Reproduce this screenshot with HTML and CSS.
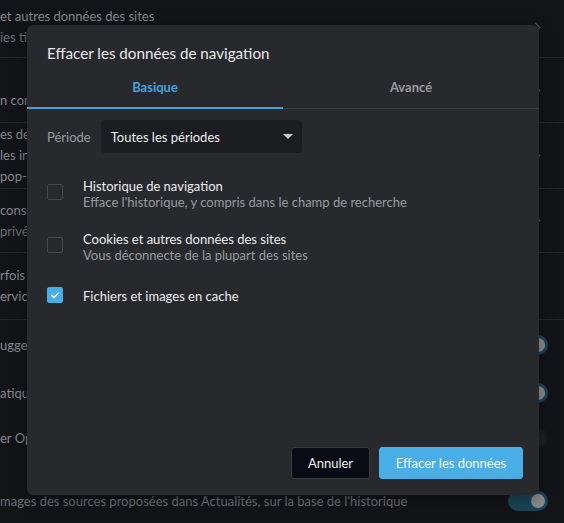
FILE: index.html
```html
<!DOCTYPE html>
<html lang="fr">
<head>
<meta charset="utf-8">
<title>Effacer les données de navigation</title>
<link rel="stylesheet" href="styles.css">
</head>
<body>
<main class="settings">
  <section class="row r1">
    <div class="texts">
      <p class="t1">et autres données des sites</p>
      <p class="t2 clip">ies tierces sont bloqués</p>
    </div>
    <span class="chev"></span>
  </section>
  <section class="row r2">
    <div class="texts clip">
      <p class="t1">&nbsp;</p>
      <p class="t1">n complète</p>
    </div>
    <span class="chev"></span>
  </section>
  <section class="row r3">
    <div class="texts clip">
      <p class="t1">es de sites</p>
      <p class="t1">les informations</p>
      <p class="t1">pop-up, redirections</p>
    </div>
    <span class="chev"></span>
  </section>
  <section class="row r4">
    <div class="texts clip">
      <p class="t1">conservation</p>
      <p class="t2">privée</p>
    </div>
    <span class="chev"></span>
  </section>
  <section class="row r5">
    <div class="texts clip">
      <p class="t1">rfois un service</p>
      <p class="t1">ervices</p>
    </div>
  </section>
  <section class="row r6 plain">
    <p class="t1 clip">ugges</p>
    <span class="toggle on"></span>
  </section>
  <section class="row r7 plain">
    <p class="t1 clip">atiqu</p>
    <span class="toggle on"></span>
  </section>
  <section class="row r8 plain">
    <p class="t1 clip">er Opera</p>
    <span class="toggle off"></span>
  </section>
  <section class="row r9 plain">
    <p class="t2">mages des sources proposées dans Actualités, sur la base de l'historique</p>
    <span class="toggle on"></span>
  </section>
</main>

<div class="dialog" role="dialog" aria-label="Effacer les données de navigation">
  <h1 class="title">Effacer les données de navigation</h1>
  <nav class="tabs">
    <span class="tab active">Basique</span>
    <span class="tab">Avancé</span>
  </nav>
  <div class="period">
    <span class="period-label">Période</span>
    <div class="select">
      <span>Toutes les périodes</span>
      <span class="caret"></span>
    </div>
  </div>
  <ul class="options">
    <li class="option">
      <span class="box"></span>
      <div>
        <div class="opt-title">Historique de navigation</div>
        <div class="opt-sub">Efface l'historique, y compris dans le champ de recherche</div>
      </div>
    </li>
    <li class="option">
      <span class="box"></span>
      <div>
        <div class="opt-title">Cookies et autres données des sites</div>
        <div class="opt-sub">Vous déconnecte de la plupart des sites</div>
      </div>
    </li>
    <li class="option single">
      <span class="box checked"><svg viewBox="0 0 16 16" width="16" height="16"><polyline points="4.2,8.4 6.9,11 11.8,5.6" fill="none" stroke="#ffffff" stroke-width="1.6" stroke-linecap="round" stroke-linejoin="round"/></svg></span>
      <div>
        <div class="opt-title">Fichiers et images en cache</div>
      </div>
    </li>
  </ul>
  <div class="actions">
    <button class="btn cancel">Annuler</button>
    <button class="btn primary">Effacer les données</button>
  </div>
</div>
</body>
</html>
```

FILE: styles.css
```css
* { box-sizing: border-box; }
html, body { margin: 0; padding: 0; }
body {
  width: 564px;
  height: 523px;
  overflow: hidden;
  background: #131418;
  font-family: "Segoe UI", Lato, "Noto Sans", sans-serif;
  font-size: 13px;
  position: relative;
}
p { margin: 0; }

/* background settings page */
.settings { display: flex; flex-direction: column; margin-top: -7px; }
.row {
  display: flex;
  align-items: center;
  justify-content: space-between;
  border-bottom: 1px solid #25262b;
  padding-right: 16px;
}
.row .t1, .row .t2 { line-height: 21px; white-space: nowrap; }
.clip { width: 27px; overflow: hidden; }
.t1 { color: #86878b; }
.t2 { color: #6d6e73; }
.r1 { height: 65px; padding-top: 4px; }
.r2 { height: 65px; }
.r3 { height: 66px; }
.r4 { height: 64px; }
.r5 { height: 67px; }
.plain { border-bottom: none; }
.r6 { height: 48px; margin-top: 1px; }
.r7 { height: 48px; }
.r8 { height: 42px; }
.r9 { height: 84px; }
.chev {
  width: 7px; height: 7px;
  border-top: 1.5px solid #55565b;
  border-right: 1.5px solid #55565b;
  transform: rotate(45deg);
  margin-right: 9px;
}
.toggle {
  position: relative;
  width: 40px; height: 20px;
  border-radius: 10px;
  flex: none;
}
.toggle.on { background: #1c4358; }
.toggle.off { background: #1a1b1f; }
.toggle::after {
  content: "";
  position: absolute;
  top: 3px; right: 3px;
  width: 14px; height: 14px;
  border-radius: 50%;
  background: #8a8a8c;
}
.toggle.off::after { background: #202125; }

/* dialog */
.dialog {
  position: absolute;
  left: 27px; top: 25px;
  width: 512px; height: 470px;
  background: #28292d;
  border-radius: 6px;
  display: flex;
  flex-direction: column;
  box-shadow: 0 4px 16px rgba(0,0,0,0.35);
}
.title {
  margin: 0;
  padding: 17px 20px 0;
  font-size: 15.2px;
  font-weight: 400;
  line-height: 22px;
  color: #e9e9ea;
}
.tabs {
  display: flex;
  margin-top: 4px;
  border-bottom: 1px solid #3b3c41;
}
.tab {
  flex: 1;
  text-align: center;
  font-weight: 700;
  font-size: 13px;
  color: #9a9b9f;
  height: 40px;
  line-height: 20px;
  padding-top: 9px;
}
.tab.active {
  color: #46a3d8;
  border-bottom: 2px solid #46a3d8;
  margin-bottom: -1px;
  height: 41px;
}
.period {
  display: flex;
  align-items: center;
  gap: 10px;
  padding: 11px 20px 0;
}
.period-label { color: #9c9da1; }
.select {
  width: 201px; height: 33px;
  background: #1c1d21;
  border-radius: 4px;
  display: flex;
  align-items: center;
  justify-content: space-between;
  padding: 0 9px 0 10px;
  color: #ececec;
}
.caret {
  width: 0; height: 0;
  border-left: 5px solid transparent;
  border-right: 5px solid transparent;
  border-top: 5px solid #c9c9cb;
}
.options {
  list-style: none;
  margin: 0;
  padding: 25px 20px 0;
  display: flex;
  flex-direction: column;
  gap: 21px;
}
.option {
  display: flex;
  align-items: flex-start;
  gap: 20px;
}
.box {
  width: 16px; height: 16px;
  border: 1px solid #47484d;
  border-radius: 2px;
  flex: none;
  margin-top: 6px;
}
.option.single { margin-top: 4px; }
.option.single .box { margin-top: -1px; }
.box.checked {
  background: #4aaee6;
  border-color: #4aaee6;
  display: flex;
  align-items: center;
  justify-content: center;
}
.box.checked svg { display: block; }
.opt-title { color: #ececec; line-height: 16px; }
.opt-sub { color: #9a9b9f; line-height: 16px; }
.actions {
  margin-top: auto;
  display: flex;
  justify-content: flex-end;
  gap: 9px;
  padding: 0 16px 16px;
}
.btn {
  font-family: inherit;
  font-size: 13px;
  height: 32px;
  border-radius: 3px;
  cursor: pointer;
}
.cancel {
  width: 79px;
  background: #0a0c15;
  border: 1px solid #383a43;
  color: #eeeeee;
}
.primary {
  width: 144px;
  background: #4aaee6;
  border: 1px solid #4aaee6;
  color: #eef7fc;
}
```
